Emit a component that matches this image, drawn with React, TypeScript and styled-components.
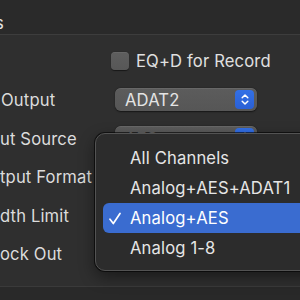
import React from "react";
import styled, { createGlobalStyle } from "styled-components";

const Global = createGlobalStyle`
  html, body { margin: 0; padding: 0; background: #2f2f2f; }
  #root { width: 300px; height: 300px; overflow: hidden; }
  * { box-sizing: border-box; }
`;

const Window = styled.div`
  position: relative;
  width: 300px;
  height: 300px;
  overflow: hidden;
  display: flex;
  flex-direction: column;
  font-family: Inter, "Liberation Sans", sans-serif;
  font-size: 16.6px;
  letter-spacing: 0.15px;
  color: #dedede;
  background: #2f2f2f;
`;

const Header = styled.div`
  height: 35px;
  flex: none;
  background: #2a2a2a;
  border-bottom: 1px solid #3d3d3d;
  display: flex;
  align-items: flex-start;
  padding-top: 13px;
`;

const HeaderTitle = styled.span`
  margin-left: -5px;
  line-height: 20px;
  color: #e2e2e2;
`;

const Panel = styled.div`
  flex: 1;
  display: flex;
  flex-direction: column;
  padding-top: 17px;
`;

const CheckRow = styled.div`
  display: flex;
  align-items: center;
  gap: 7px;
  padding-left: 111px;
  height: 18px;
  margin-bottom: 10px;
`;

const CheckBox = styled.div`
  width: 18px;
  height: 18px;
  border-radius: 4px;
  background: linear-gradient(#5e5e5e, #575757);
  box-shadow: inset 0 0.5px 0 rgba(255, 255, 255, 0.12), 0 0.5px 1px rgba(0, 0, 0, 0.5);
`;

const CheckLabel = styled.span`
  color: #e0e0e0;
  line-height: 18px;
`;

const FormRow = styled.div`
  height: 38.5px;
  display: grid;
  grid-template-columns: 115px 142px;
  align-items: center;
`;

const Label = styled.span<{ $indent: number }>`
  padding-left: ${(p) => p.$indent}px;
  white-space: nowrap;
  color: #dcdcdc;
  line-height: 20px;
  transform: translateY(1px);
`;

const Popup = styled.div`
  height: 23px;
  border-radius: 6px;
  background: linear-gradient(#5c5c5c, #565656);
  box-shadow: inset 0 0.5px 0 rgba(255, 255, 255, 0.15), 0 0.5px 1.5px rgba(0, 0, 0, 0.55);
  display: flex;
  align-items: center;
  justify-content: space-between;
  padding: 0 3px 0 10px;
  color: #e4e4e4;
`;

const PopupText = styled.span`
  line-height: 20px;
  transform: translateY(0.5px);
`;

const Stepper = styled.div`
  width: 19px;
  height: 19px;
  border-radius: 4px;
  background: linear-gradient(#3370e6, #2a60d6);
  display: flex;
  align-items: center;
  justify-content: center;
`;

const Footer = styled.div`
  position: absolute;
  left: 0;
  right: 0;
  bottom: 0;
  height: 14px;
  background: #292929;
  border-top: 1px solid #3a3a3a;
`;

const Menu = styled.div`
  position: absolute;
  left: 95px;
  top: 133px;
  width: 240px;
  height: 138px;
  border-radius: 10px;
  background: #2c2c2c;
  border: 1px solid #535353;
  box-shadow: 0 0 0 1px rgba(0, 0, 0, 0.6), 0 6px 16px rgba(0, 0, 0, 0.45);
  padding: 9px 0 8px 7px;
  display: flex;
  flex-direction: column;
`;

const MenuItem = styled.div<{ $selected?: boolean }>`
  position: relative;
  height: 30px;
  line-height: 30px;
  padding-left: 27px;
  border-radius: 6px;
  white-space: nowrap;
  color: ${(p) => (p.$selected ? "#ffffff" : "#e6e6e6")};
  background: ${(p) => (p.$selected ? "#3a6cd0" : "transparent")};
`;

const Check = styled.svg`
  position: absolute;
  left: 6px;
  top: 9px;
`;

const Chevrons = () => (
  <svg width="10" height="13" viewBox="0 0 10 13" fill="none">
    <path d="M2.2 4.8 L5 2 L7.8 4.8" stroke="#fff" strokeWidth="1.5" strokeLinecap="round" strokeLinejoin="round" />
    <path d="M2.2 8.2 L5 11 L7.8 8.2" stroke="#fff" strokeWidth="1.5" strokeLinecap="round" strokeLinejoin="round" />
  </svg>
);

const rows: { label: string; indent: number; value: string }[] = [
  { label: "Output", indent: 1, value: "ADAT2" },
  { label: "ut Source", indent: 0, value: "AES" },
  { label: "tput Format", indent: 0, value: "" },
  { label: "dth Limit", indent: 0, value: "" },
  { label: "ock Out", indent: 0, value: "" },
];

const items = ["All Channels", "Analog+AES+ADAT1", "Analog+AES", "Analog 1-8"];

export default function App() {
  return (
    <>
      <Global />
      <Window>
        <Header>
          <HeaderTitle>s</HeaderTitle>
        </Header>
        <Panel>
          <CheckRow>
            <CheckBox />
            <CheckLabel>EQ+D for Record</CheckLabel>
          </CheckRow>
          {rows.map((r) => (
            <FormRow key={r.label}>
              <Label $indent={r.indent}>{r.label}</Label>
              <Popup>
                <PopupText>{r.value}</PopupText>
                <Stepper>
                  <Chevrons />
                </Stepper>
              </Popup>
            </FormRow>
          ))}
        </Panel>
        <Footer />
        <Menu>
          {items.map((it) => (
            <MenuItem key={it} $selected={it === "Analog+AES"}>
              {it === "Analog+AES" && (
                <Check width="12" height="13" viewBox="0 0 12 13" fill="none">
                  <path d="M1 7.2 L4.3 11.5 L11 1.5" stroke="#fff" strokeWidth="1.7" strokeLinecap="round" strokeLinejoin="round" />
                </Check>
              )}
              {it}
            </MenuItem>
          ))}
        </Menu>
      </Window>
    </>
  );
}
